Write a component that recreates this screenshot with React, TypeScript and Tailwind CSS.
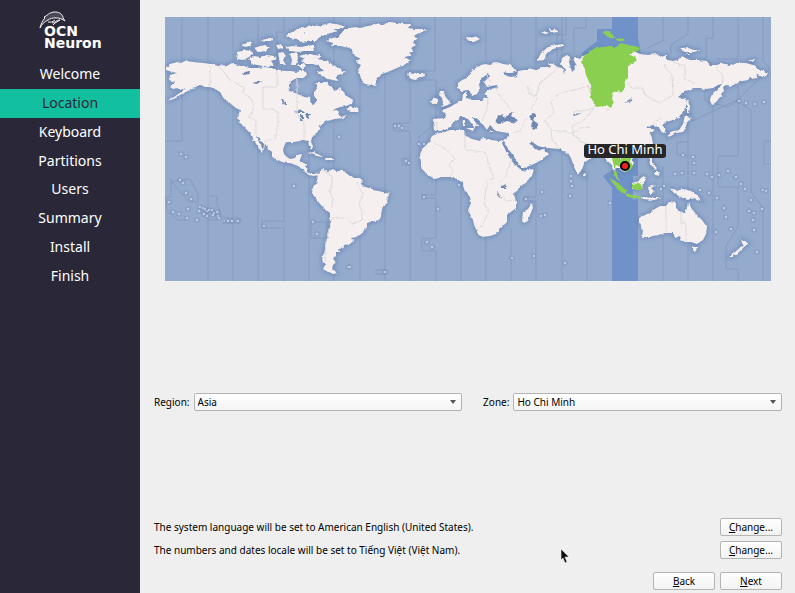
import clsx from "clsx";

const STEPS = [
  "Welcome",
  "Location",
  "Keyboard",
  "Partitions",
  "Users",
  "Summary",
  "Install",
  "Finish",
];

const LAND = [
  // north america
  "M166 67 170 64 177 62 181 63 185 61 194 62 203 63 212 64 218 66 223 65 227 66 232 63 237 65 243 66 250 68 257 68 266 67 275 69 285 71 291 71 297 72 303 70 306 72 307 75 302 78 297 78 293 80 290 82 289 86 288 90 292 92 295 93 300 95 305 97 310 98 311 103 314 104 316 102 316 98 314 96 314 92 317 89 316 86 315 84 318 82 327 82 329 85 332 87 334 91 337 90 340 87 343 91 345 95 350 98 353 100 352 104 346 106 340 107 336 109 330 111 337 110 338 113 340 117 347 115 343 118 335 119 331 120 327 121 325 122 321 125 320 127 317 133 312 138 311 141 313 147 311 150 309 146 308 141 303 140 300 141 293 142 287 142 285 144 283 150 284 154 287 157 290 159 295 158 297 155 302 154 300 160 299 163 303 163 307 164 306 168 307 172 310 174 314 174 317 173 318 175 314 176 309 175 305 172 302 169 298 166 290 163 287 163 282 162 276 159 272 156 272 152 270 150 266 146 263 143 260 139 256 136 259 142 263 150 262 152 258 147 255 142 252 138 250 133 246 129 242 125 239 122 238 117 240 110 236 108 232 105 229 102 225 100 222 96 220 92 215 89 210 87 205 87 200 85 196 87 192 88 188 91 184 93 180 95 174 99 167 101 174 97 181 92 186 88 180 90 177 88 173 89 170 87 174 84 175 82 169 80 170 75 177 73 172 72 166 70Z",
  "M346 110 350 106 354 107 358 109 357 112 351 112Z",
  // arctic islands
  "M238 52 245 50 251 51 253 53 249 57 243 60 237 59Z",
  "M248 60 250 57 254 56 260 57 267 55 274 56 277 59 272 61 275 65 268 67 263 66 257 65 252 64Z",
  "M242 45 247 43 252 42 250 46 245 47Z",
  "M254 48 260 46 266 45 270 48 266 51 258 52Z",
  "M262 40 269 38 273 38 271 41 265 42Z",
  "M276 45 281 44 283 48 278 49Z",
  "M278 53 283 52 286 56 283 60 286 65 280 64 279 58Z",
  "M286 47 293 46 301 47 313 45 314 51 304 51 299 52 290 51Z",
  "M290 54 297 52 298 58 296 65 291 65 292 60Z",
  "M299 56 306 54 313 56 320 54 320 58 313 60 305 59Z",
  "M288 34 294 31 303 27 307 29 304 33 311 35 318 36 312 41 302 43 297 39 290 38 286 36Z",
  "M298 65 304 63 306 66 302 69Z",
  "M305 28 310 25 318 26 330 23 345 26 342 29 333 29 338 31 327 34 320 37 316 41 309 40 305 34Z",
  "M301 60 308 58 308 53 314 55 320 60 327 60 333 65 339 68 345 72 341 74 338 75 335 77 339 81 333 80 327 79 322 75 316 72 324 71 319 66 313 64 306 64Z",
  // greenland
  "M326 41 333 38 338 37 343 31 350 28 355 27 360 28 368 26 377 24 383 25 390 22 397 23 405 24 410 25 408 28 415 29 427 29 422 32 417 34 414 36 417 39 413 42 416 45 411 48 414 51 409 53 412 55 405 57 411 61 406 64 397 68 390 71 382 74 377 79 375 86 370 85 365 84 361 79 360 75 358 70 361 65 357 63 356 60 361 59 355 56 353 52 350 48 345 47 340 46 330 46 333 43Z",
  "M407 75 409 73 414 74 418 73 423 73 425 76 420 78 415 80 411 79Z",
  // south america
  "M318 174 320 171 323 169 325 170 328 172 333 169 336 171 343 171 346 173 350 175 354 178 360 178 363 181 361 186 366 187 373 190 378 191 383 192 389 194 388 198 387 202 384 205 382 209 381 217 379 220 375 221 370 222 367 223 366 227 363 232 360 235 357 237 351 238 353 241 350 244 343 245 344 248 339 249 340 252 336 252 336 256 333 258 334 262 336 262 333 265 332 268 337 273 333 274 328 272 323 269 325 265 322 260 323 255 325 250 325 245 327 240 328 235 329 230 330 220 330 213 326 210 323 207 320 204 317 200 314 196 312 193 313 187 316 184 317 180Z",
  // eurasia and africa
  "M458 83 462 80 467 78 470 73 473 70 477 67 485 64 490 65 497 62 503 64 510 65 517 71 512 73 508 73 503 72 507 76 511 77 517 76 518 71 524 70 528 70 532 69 537 70 543 67 550 67 548 63 553 64 558 67 562 68 564 73 565 70 561 64 562 58 567 55 570 57 569 62 571 68 572 72 575 69 574 64 577 66 573 59 576 57 580 59 582 57 588 52 600 49 615 49 628 48 640 54 648 55 657 54 661 57 667 55 667 60 673 61 677 60 683 57 690 60 698 60 707 61 710 65 717 65 722 63 729 66 737 63 746 63 753 65 758 69 764 71 768 73 766 76 762 77 757 75 755 79 750 77 748 80 743 81 737 83 730 87 726 85 723 87 724 91 722 94 718 100 715 103 712 105 710 101 711 96 714 92 719 88 722 84 718 85 713 88 706 89 700 88 694 88 688 90 683 93 678 97 682 99 686 98 687 104 684 110 682 113 678 118 673 120 667 122 662 125 665 128 666 132 662 133 660 129 657 126 653 125 647 127 646 129 652 129 655 130 650 133 652 138 653 144 649 150 643 154 636 156 632 159 634 163 630 170 624 172 620 168 616 168 616 174 620 181 617 178 613 170 611 164 606 160 603 154 597 153 591 158 584 163 582 170 578 174 574 167 571 158 568 153 563 151 560 149 547 148 538 146 531 141 529 143 535 149 541 151 544 150 549 154 545 158 536 163 524 168 521 168 517 161 507 147 504 142 502 143 508 155 514 164 519 168 522 171 528 170 534 169 532 176 526 182 519 188 514 194 516 202 516 208 507 215 507 222 501 228 496 234 490 236 482 237 479 235 475 227 473 220 468 210 471 203 470 197 464 190 463 183 457 179 450 177 442 177 435 179 428 175 421 168 421 162 420 155 422 149 429 142 432 136 438 133 444 132 450 130 458 130 465 130 464 135 472 139 480 141 483 138 491 140 499 141 506 140 509 133 502 132 496 131 492 127 490 125 487 130 484 126 481 122 475 117 472 117 475 122 479 126 475 126 475 129 472 124 468 119 465 117 460 117 456 120 452 124 447 129 440 131 434 130 433 119 445 118 446 115 441 110 445 109 450 107 455 104 462 101 463 94 467 92 467 98 472 100 482 100 487 97 485 92 491 89 498 87 497 85 487 87 484 82 490 76 489 73 482 78 479 84 480 89 477 94 472 96 469 90 462 91 458 88Z",
  // islands around europe and africa
  "M440 91 444 91 445 96 449 101 451 104 445 106 441 107 443 103 442 98 439 95Z",
  "M431 102 434 97 438 98 437 103 433 105Z",
  "M466 128 474 128 473 131Z",
  "M463 120 465 120 465 126 462 126Z",
  "M488 131 494 131 492 132Z",
  "M532 203 533 208 530 215 528 221 524 223 522 220 523 212 528 209Z",
  "M537 61 541 53 548 47 556 45 563 44 563 46 553 49 547 53 544 60Z",
  "M541 33 545 31 549 33 545 34ZM549 29 557 30 558 32 551 33Z",
  "M466 38 475 36 480 39 474 42 470 42Z",
  "M584 172 586 174 585 177 583 176Z",
  // east asia
  "M687 99 690 107 689 113 687 113 687 106Z",
  "M685 115 692 118 687 121 686 128 683 132 676 133 671 136 667 137 670 132 679 130 683 124Z",
  "M649 156 652 157 652 163 657 168 655 170 650 165Z",
  "M655 172 660 172 659 176 655 175Z",
  "M679 49 687 47 693 50 701 50 694 52 685 52Z",
  "M684 54 690 54 689 55Z",
  "M748 60 755 60 752 62Z",
  // oceania
  "M632 183 638 181 643 176 647 178 644 182 643 188 637 190 632 189Z",
  "M648 187 657 185 651 188 655 192 650 194Z",
  "M642 197 652 198 662 198 654 200 643 199Z",
  "M668 187 676 191 683 189 691 191 697 195 702 201 694 198 688 200 680 197 674 193Z",
  "M639 218 647 214 650 213 653 210 660 206 666 206 669 202 676 203 676 208 681 212 685 213 687 208 688 202 692 209 696 214 702 220 707 227 706 234 703 240 697 244 691 242 685 242 681 240 680 236 675 238 673 236 673 233 665 233 658 235 648 237 642 237 643 230 639 222Z",
  "M692 247 697 247 696 251 694 252Z",
  "M740 238 743 241 749 243 744 247 739 252 733 257 729 257 735 252 741 247 743 245Z",
  // caribbean
  "M307 153 314 152 320 155 323 157 317 156 311 154Z",
  "M325 158 332 158 333 160 326 160Z",
];

const WATER = [
  "M495 122 498 116 502 114 503 117 507 116 513 112 511 116 518 120 515 123 507 121 500 124Z",
  "M529 117 532 113 537 114 535 117 533 120 537 123 537 128 533 130 531 126 532 122Z",
  "M242 73 249 71 250 74 243 75Z",
  "M252 83 263 80 257 84Z",
  "M281 99 283 99 286 105 284 105Z",
  "M294 112 301 109 305 113 298 113Z",
  "M300 115 303 115 303 121 300 121Z",
  "M305 114 311 114 308 119Z",
  "M502 186 506 184 505 188 502 188Z",
  "M497 190 501 199 498 196Z",
  "M624 103 630 99 633 96 631 101Z",
  "M573 114 582 113 574 116Z",
];

const ZONE_LINES = [
  "M182 17V141H165M208 17V281M233 17V281M258 17V281M284 17V32H277V66M284 100V221H262V228H284V281M309 17V24M309 142V281M334 172V17M334 275V281M360 17V46M360 72V281M385 74V281M410 17V24M410 60V73M410 81V123H394V131H410V281",
  "M435 17V71H406V80H436V123L419 137V150M410 158H402V165H410M436 179V195H422V198H436V238H422V251H436V281M461 17V65M461 182V281M486 17V62M486 237V281M511 17V62M511 228V281M536 17V67M536 163V197H523V201H536V281M562 281V17",
  "M566 17V35H557V62M586 17V28H574V54M587 175V281M663 17V41L647 48M663 166V281M688 17V34L671 45V54M688 98V200M688 142H677V155H688M688 244V281M713 17V38H706V59M713 106V281M738 17V59H717M738 86V156H718V187H738V227L726 246V269H738V281M763 17V61L769 67V70L737 100 692 121M705 89V101L728 107 737 101 751 110V192L763 208V281M771 141H764V164H771",
  "M171 181H175L190 179 198 194 198 202H189ZM171 178V197H166V210L178 220H186M210 196H217V205L221 213 217 220H208M222 218H240V223H222M312 222H327V238H311V222M376 270H386V274H376Z",
];

const BORDERS = [
  "M210 65V86M218 66 224 72 230 80 244 87 243 92 252 100 254 107 249 117 256 121V135M277 70V87H263V109H272L278 112V124L275 139 265 141 264 148M297 77V114L304 123V140",
  "M323 170 332 176V184L330 192 333 200 331 208M332 218 326 240 325 262M332 218 346 218 353 224 362 220 362 212 359 204 363 194 359 187 357 182",
  "M434 142 448 151 455 158 449 164 453 171 450 177M465 133 465 149 486 153 489 167 494 178 487 181 484 203 489 211 482 226 478 227M512 158 505 178 499 182M500 194 506 201 515 200M445 83",
  "M487 75 490 82M495 88 501 97 512 111M488 98 487 109 482 120M558 67 550 76 540 82 536 96 527 86 529 93 537 99 531 110M527 118 520 131 512 133M551 102 560 93 575 90 588 86 590 93M551 102 554 113 545 120 551 130 560 131 573 133 580 128 590 127M551 130 552 140 560 148M624 78 632 88 643 88 645 95 660 103 673 95 672 75 663 65M612 106 606 111M673 62 685 66 684 78 694 84M716 67 723 76 722 84M595 107 588 110 573 112M595 107 584 120 572 126 573 135 582 142 598 147M653 124 661 118M433 122 437 122 437 131",
  "M666 206V232M681 212V223H686V241",
];

const ZONE_LAND = [
  "M585 54 595 48 603 47 610 46 616 47 621 43 629 45 634 46 639 47 640 50 632 53 629 55 635 56 638 60 631 64 628 68 628 78 625 81 626 86 622 91 614 92 612 98 614 103 612 107 604 106 596 107 593 101 591 98 590 84 586 75 585 69 581 62 583 58Z",
  "M602 32 608 31 613 34 615 38 609 38Z",
  "M616 39 624 38 624 41 618 41Z",
  "M612 158H632L630 161 633 166 630 171 625 172 624 168 620 167 617 165 615 167 617 174 620 181 614 175 614 167Z",
  "M609 178 614 180 621 186 626 190 626 194 621 192 615 186Z",
  "M626 194 634 195 642 197 641 199 632 198 626 196Z",
  "M632 184 639 183 643 186 641 190 635 190 632 188Z",
];

const ISLETS = [
  [200, 207], [203, 208], [205, 209], [207, 211], [209, 210], [212, 210], [199, 211], [214, 213],
  [217, 212], [204, 214], [207, 216], [213, 215], [218, 216], [219, 218], [188, 209], [197, 220],
  [187, 218], [173, 212], [179, 214], [169, 202], [180, 180], [183, 183], [186, 193], [191, 199],
  [228, 221], [232, 221], [238, 221], [186, 157], [181, 154], [264, 226], [294, 186], [317, 234],
  [348, 267], [350, 267], [385, 272], [395, 126], [399, 126], [402, 128], [339, 137], [419, 144],
  [424, 144], [406, 161], [409, 163], [459, 185], [424, 197], [438, 209], [427, 242], [432, 247],
  [512, 258], [534, 256], [542, 192], [526, 199], [541, 216], [545, 215], [571, 176], [571, 181],
  [572, 186], [570, 196], [565, 263], [610, 203], [683, 155], [693, 157], [694, 163], [675, 174],
  [682, 173], [694, 173], [707, 174], [712, 177], [719, 175], [728, 171], [736, 177], [741, 184],
  [745, 189], [763, 190], [766, 191], [700, 190], [709, 193], [717, 198], [724, 208], [726, 217],
  [731, 229], [716, 232], [751, 200], [749, 211], [754, 213], [762, 209], [753, 220], [754, 230],
  [757, 252], [739, 101], [746, 103], [755, 104], [764, 102], [661, 189], [664, 186], [313, 222],
];

const LABEL_TEXT = "text-[10px] leading-[18px]";

function Logo() {
  return (
    <div className="pl-11 pt-[11px]">
      <svg viewBox="0 0 30 14" className="-ml-1 h-3.5 w-[30px] overflow-visible">
        <path
          d="M0 17C1 13 2 10 5 7L4 6C7 5 9 1 15 1C20 1 23 4 23 7L25 10C20 6 12 6 8 9C4 11 2 13 0 17Z"
          fill="#4a4858"
          stroke="#f4f4f6"
          strokeWidth="1"
        />
        <path d="M8 11 12 11 15 9M12 12C15 12 16 9 20 9L15 12 13 14" fill="none" stroke="#f4f4f6" />
      </svg>
      <p className="font-['DejaVu_Sans'] text-sm leading-3 font-bold text-white">
        OCN
        <br />
        Neuron
      </p>
    </div>
  );
}

function WorldMap({ zone }: { zone: string }) {
  return (
    <svg viewBox="165 17 606 264" className="block w-full bg-[#94abcd]" role="img" aria-label="World map">
      <filter id="coast" x="0" y="0" width="100%" height="100%">
        <feTurbulence type="fractalNoise" baseFrequency="0.25" numOctaves="2" seed="4" />
        <feDisplacementMap in="SourceGraphic" scale="3" xChannelSelector="R" yChannelSelector="G" />
      </filter>
      <filter id="shade">
        <feGaussianBlur stdDeviation="2" />
      </filter>
      <path d="M612 17H638V38L641 53 582 57 582 53 597 41V29H612ZM603 176 612 170 612 158H638V176H633V200L638 198V281H612V188Z" fill="#7092c9" />
      {ZONE_LINES.map((d) => (
        <path key={d} d={d} fill="none" stroke="#8799bf" strokeWidth="1" />
      ))}
      <path d={LAND.join("")} fill="#5f7cae" stroke="#5f7cae" strokeWidth="3" filter="url(#shade)" opacity="0.6" />
      <g filter="url(#coast)">
        <path d={LAND.join("")} fill="#f5efef" />
        <path d={WATER.join("")} fill="#7089b3" />
        {BORDERS.map((d) => (
          <path key={d} d={d} fill="none" stroke="#dfdbdb" strokeWidth="1" />
        ))}
        <path d={ZONE_LAND.join("")} fill="#8acf50" />
      </g>
      {ISLETS.map(([x, y]) => (
        <g key={`${x}-${y}`}>
          <circle cx={x} cy={y} r="3" fill="#7089b8" opacity="0.2" />
          <circle cx={x} cy={y} r="1" fill="#d3d8e6" />
        </g>
      ))}
      <circle cx="625" cy="166" r="4" fill="#ee2222" stroke="#000" strokeWidth="2" />
      <rect x="584" y="144" width="82" height="14" rx="3" fill="#262626" />
      <text x="625" y="154" textAnchor="middle" fill="#fff" className="text-[13px]">
        {zone}
      </text>
    </svg>
  );
}

function Select({ id, value }: { id: string; value: string }) {
  return (
    <div className="relative flex-1">
      <select
        id={id}
        className="block h-[18px] w-full appearance-none rounded-xs border border-[#b4b4b4] bg-linear-to-b from-white to-[#f4f4f4] px-[3px] text-[10px] leading-4 text-black"
      >
        <option>{value}</option>
      </select>
      <svg viewBox="0 0 6 4" className="pointer-events-none absolute top-[7px] right-[6px] h-1 w-1.5">
        <path d="M0 0H6L3 4Z" fill="#555" />
      </svg>
    </div>
  );
}

function Button({ text }: { text: string }) {
  return (
    <button className="h-[18px] w-[62px] rounded-xs border border-[#b4b4b4] bg-linear-to-b from-white to-[#f2f2f2] text-[10px] leading-4 text-black">
      <span className="underline">{text[0]}</span>
      {text.slice(1)}
    </button>
  );
}

export default function App() {
  return (
    <div className="flex min-h-screen bg-[#efefef] font-['Noto_Sans',sans-serif] text-black">
      <aside className="w-[140px] shrink-0 bg-[#2a2838]">
        <Logo />
        <ol className="mt-[11px] grid h-[230px] grid-rows-8">
          {STEPS.map((step) => (
            <li
              key={step}
              className={clsx(
                "flex items-center justify-center text-sm",
                step === "Location" ? "bg-[#12bf9f] text-[#2a2838]" : "text-white"
              )}
            >
              {step}
            </li>
          ))}
        </ol>
      </aside>
      <main className="relative flex flex-1 flex-col pt-[17px] pr-[13px] pb-[3px] pl-3.5">
        <div className="px-[11px]">
          <WorldMap zone="Ho Chi Minh" />
        </div>
        <div className="flex flex-1 items-center pt-[5px]">
          <label htmlFor="region" className={clsx(LABEL_TEXT, "mr-1")}>
            Region:
          </label>
          <Select id="region" value="Asia" />
          <label htmlFor="zone" className={clsx(LABEL_TEXT, "mr-1 ml-[21px]")}>
            Zone:
          </label>
          <Select id="zone" value="Ho Chi Minh" />
        </div>
        <div className="flex flex-col gap-[5px]">
          <div className="flex items-center justify-between">
            <p className={LABEL_TEXT}>The system language will be set to American English (United States).</p>
            <Button text="Change..." />
          </div>
          <div className="flex items-center justify-between">
            <p className={LABEL_TEXT}>The numbers and dates locale will be set to Tiếng Việt (Việt Nam).</p>
            <Button text="Change..." />
          </div>
        </div>
        <div className="mt-[13px] flex justify-end gap-[5px]">
          <Button text="Back" />
          <Button text="Next" />
        </div>
        <svg viewBox="0 0 10 16" className="absolute right-[225px] bottom-[29px] h-4 w-2.5">
          <path d="M1 1V12L3 10L5 15L7 14L5 9H9Z" fill="#111" stroke="#fff" strokeWidth="0.5" />
        </svg>
      </main>
    </div>
  );
}
